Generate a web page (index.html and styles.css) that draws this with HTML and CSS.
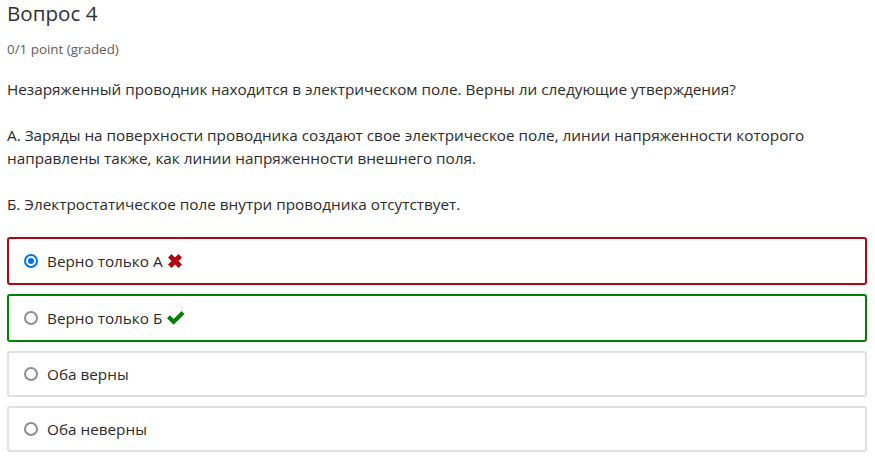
FILE: index.html
```html
<!DOCTYPE html>
<html lang="ru">
<head>
    <meta charset="UTF-8">
    <title>Вопрос 4</title>
    <link rel="stylesheet" href="styles.css">
</head>
<body>
<div class="problem">
    <h3 class="problem-title">Вопрос 4</h3>
    <div class="problem-progress">0/1 point (graded)</div>

    <p>Незаряженный проводник находится в электрическом поле. Верны ли следующие утверждения?</p>
    <p>А. Заряды на поверхности проводника создают свое электрическое поле, линии напряженности которого направлены также, как линии напряженности внешнего поля.</p>
    <p>Б. Электростатическое поле внутри проводника отсутствует.</p>

    <div class="choices">
        <label class="choice incorrect">
            <span class="radio checked"></span>
            Верно только А
            <svg class="mark" width="14" height="14" viewBox="0 0 14 14">
                <path d="M0 3.5 L3.5 0 L7 3.5 L10.5 0 L14 3.5 L10.5 7 L14 10.5 L10.5 14 L7 10.5 L3.5 14 L0 10.5 L3.5 7 Z" fill="#b20610"/>
            </svg>
        </label>
        <label class="choice correct">
            <span class="radio"></span>
            Верно только Б
            <svg class="mark" width="18" height="14" viewBox="0 0 18 14">
                <path d="M0 7.2 L2.9 4.3 L6.6 8 L14.6 0 L17.5 2.9 L6.6 13.8 Z" fill="#008100"/>
            </svg>
        </label>
        <label class="choice">
            <span class="radio"></span>
            Оба верны
        </label>
        <label class="choice">
            <span class="radio"></span>
            Оба неверны
        </label>
    </div>
</div>
</body>
</html>
```

FILE: styles.css
```css
body {
    margin: 0;
    padding: 0 8px 0 7px;
    font-family: "Open Sans", "Noto Sans", sans-serif;
    color: #2b2b2b;
    background: #fff;
}

.problem-title {
    font-size: 20.6px;
    font-weight: normal;
    color: #313131;
    margin: 0;
    line-height: 26px;
}

.problem-progress {
    font-size: 13.4px;
    color: #5e5e5e;
    margin-top: 15px;
    line-height: 17px;
}

.problem p {
    font-size: 15.3px;
    line-height: 23px;
    margin: 0 0 23px 0;
}

.problem p:first-of-type {
    margin-top: 20px;
}

.choices {
    display: flex;
    flex-direction: column;
    gap: 9px;
    margin-top: -2px;
}

.choice {
    display: flex;
    align-items: center;
    box-sizing: border-box;
    height: 46px;
    border: 2px solid #e0e0e0;
    border-radius: 3px;
    padding-left: 15px;
    font-size: 15.3px;
}

.choice.incorrect {
    border-color: #b20610;
    height: 48px;
}

.choice.correct {
    border-color: #008100;
    height: 48px;
}

.radio {
    width: 10px;
    height: 10px;
    border: 2px solid #8d8d96;
    border-radius: 50%;
    margin-right: 9px;
    position: relative;
}

.radio.checked {
    border-color: #0075eb;
}

.radio.checked::after {
    content: "";
    position: absolute;
    left: 2px;
    top: 2px;
    width: 6px;
    height: 6px;
    border-radius: 50%;
    background: #0075eb;
}

.mark {
    margin-left: 5px;
}
```
